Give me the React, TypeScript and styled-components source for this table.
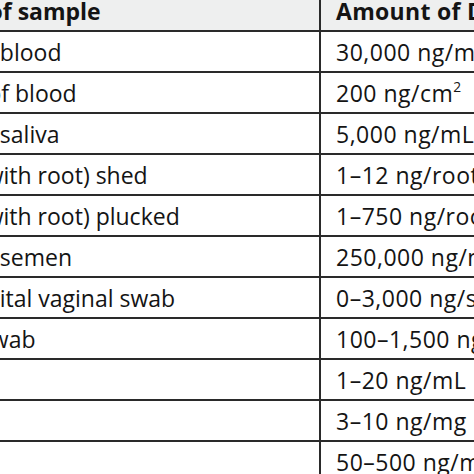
import React from "react";
import styled, { createGlobalStyle } from "styled-components";

const GlobalStyle = createGlobalStyle`
  html, body {
    margin: 0;
    padding: 0;
    background: #ffffff;
  }
`;

const rows: [string, React.ReactNode][] = [
  ["Liquid blood", "30,000 ng/mL"],
  ["Stain of blood", <>200 ng/cm<sup>2</sup></>],
  ["Liquid saliva", "5,000 ng/mL"],
  ["Hair (with root) shed", "1–12 ng/root"],
  ["Hair (with root) plucked", "1–750 ng/root"],
  ["Liquid semen", "250,000 ng/mL"],
  ["Postcoital vaginal swab", "0–3,000 ng/swab"],
  ["Oral swab", "100–1,500 ng/swab"],
  ["Urine", "1–20 ng/mL"],
  ["Bone", "3–10 ng/mg"],
  ["Tissue", "50–500 ng/mg"],
];

const App = () => {
  return (
    <Page>
      <GlobalStyle />
      <Table>
        <colgroup>
          <SampleCol />
          <AmountCol />
        </colgroup>
        <thead>
          <tr>
            <HeadCell>Type of sample</HeadCell>
            <HeadCell $spaced>Amount of DNA</HeadCell>
          </tr>
        </thead>
        <tbody>
          {rows.map(([sample, amount], i) => (
            <tr key={i}>
              <Cell>{sample}</Cell>
              <Cell $spaced>{amount}</Cell>
            </tr>
          ))}
        </tbody>
      </Table>
    </Page>
  );
};

export default App;

const Page = styled.div`
  width: 474px;
  height: 474px;
  overflow: hidden;
  background: #ffffff;
`;

const Table = styled.table`
  margin-left: -87px;
  margin-top: -9px;
  width: 660px;
  border-collapse: collapse;
  table-layout: fixed;
  font-family: "Open Sans", "Liberation Sans", sans-serif;
  font-size: 23px;
  color: #141414;
`;

const SampleCol = styled.col`
  width: 407px;
`;

const AmountCol = styled.col`
  width: 253px;
`;

const HeadCell = styled.th<{ $spaced?: boolean }>`
  height: 39px;
  padding: 0 0 0 15px;
  text-align: left;
  font-weight: 700;
  letter-spacing: ${(p) => (p.$spaced ? "0.3px" : "0")};
  background: #eeefef;
  border-right: 2px solid #2a2a2a;
  border-bottom: 2px solid #2a2a2a;
  white-space: nowrap;
  overflow: hidden;
`;

const Cell = styled.td<{ $spaced?: boolean }>`
  height: 39px;
  padding: 0 0 0 15px;
  text-align: left;
  letter-spacing: ${(p) => (p.$spaced ? "0.5px" : "0")};
  border-right: 2px solid #2a2a2a;
  border-bottom: 2px solid #2a2a2a;
  white-space: nowrap;
  overflow: hidden;

  sup {
    font-size: 0.6em;
    line-height: 0;
    vertical-align: 0.75em;
  }
`;
